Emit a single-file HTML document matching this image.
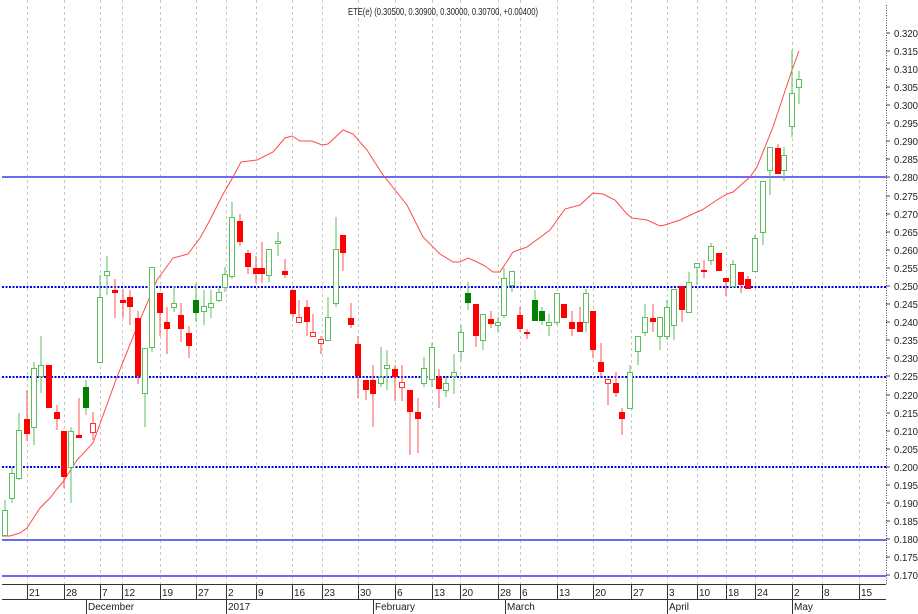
<!DOCTYPE html>
<html><head><meta charset="utf-8"><style>
html,body{margin:0;padding:0;background:#fff;}
svg{display:block;font-family:"Liberation Sans",Arial,sans-serif;}
</style></head><body>
<svg width="918" height="614" viewBox="0 0 918 614" xmlns="http://www.w3.org/2000/svg">
<rect width="918" height="614" fill="#fff"/>
<g stroke="#c8c8c8" stroke-width="1" stroke-dasharray="3,3">
<path d="M27.5 0V584M64.5 0V584M100.5 0V584M122.5 0V584M160.5 0V584M196.5 0V584M226.5 0V584M256.5 0V584M292.5 0V584M322.5 0V584M358.5 0V584M395.5 0V584M432.5 0V584M460.5 0V584M498.5 0V584M520.5 0V584M557.5 0V584M593.5 0V584M631.5 0V584M667.5 0V584M697.5 0V584M726.5 0V584M755.5 0V584M792.5 0V584M822.5 0V584M859.5 0V584"/>
</g>
<g stroke="#6b6bf0" stroke-width="2">
<path d="M2 177H886M2 540H886M2 576H886"/>
</g>
<g stroke="#0000ee" stroke-width="2" stroke-dasharray="2,1.5">
<path d="M2 287H886M2 377H886M2 467H886"/>
</g>
<polyline fill="none" stroke="#ff4a4a" stroke-width="1" points="2,536 10,536 20,533 27,528 40,508 50,498 57,489 63,482 77,460 93,443 117,377 137,327 157,280 173,258 188,254 200,238 210,220 222,196 233,177 241,162 257,160 273,152 285,138 292,136 300,141 312,141 322,145 328,144 343,130 353,134 367,150 383,175 407,205 423,237 440,254 453,262 460,262 468,258 475,261 485,266 493,272 500,272 513,252 527,247 550,230 565,209 580,205 593,193 603,194 615,200 627,214 632,218 647,220 660,226 665,225 680,220 697,212 702,210 717,200 727,194 733,192 750,177 757,167 773,127 792,70 799,51"/>
<g id="c"></g>
<g>
<!-- candles -->
<g stroke-width="1">
<path stroke="#5cbf5c" d="M5 500V535M12 467V503M19 413V480M34 362V445M41 336V393M71 427V503M86 380V415M100 275V362M107 256V295M145 348V427M152 267V352M174 286V312M196 283V322M204 290V325M211 290V318M219 288V302M225 267V292M232 202V279M269 249V282M278 232V256M328 297V340M336 217V307M381 347V387M387 350V390M424 357V387M432 343V387M446 376V397M454 354V394M461 325V361M468 282V310M483 314V350M498 317V332M504 268V318M512 271V292M535 290V321M542 307V325M549 314V336M557 293V325M586 289V332M630 365V408M638 336V365M645 304V336M660 317V350M667 300V340M674 289V340M689 272V312M697 263V285M711 243V265M733 260V286M755 235V271M763 181V245M770 147V195M784 147V181M792 50V137M799 71V104"/>
<path stroke="#ff5050" d="M27 390V441M49 365V408M57 405V430M64 431V488M79 398V438M93 412V440M115 279V318M123 290V318M130 290V325M138 311V384M160 293V336M167 307V354M181 303V342M189 326V358M240 214V246M248 250V274M256 256V283M262 242V283M285 259V278M293 290V318M299 300V322M307 300V336M313 314V336M321 336V354M343 235V271M351 303V328M358 336V398M366 380V400M373 365V427M395 365V401M402 365V401M410 390V455M418 398V453M439 369V408M476 304V347M491 311V328M520 307V332M527 329V339M564 304V318M572 311V336M580 307V332M593 311V358M601 343V376M608 379V405M616 372V397M622 408V435M653 304V332M682 286V322M704 260V278M719 253V271M726 278V296M741 272V293M748 276V289M778 144V174"/>
</g>
<g fill="#fff" stroke="#5cbf5c" stroke-width="1">
<rect x="2.5" y="510.5" width="5" height="25"/><rect x="9.5" y="473.5" width="5" height="25"/><rect x="16.5" y="430.5" width="5" height="48"/><rect x="31.5" y="368.5" width="5" height="59"/><rect x="38.5" y="365.5" width="5" height="11"/><rect x="68.5" y="431.5" width="5" height="36"/><rect x="97.5" y="297.5" width="5" height="65"/><rect x="104.5" y="271.5" width="5" height="4"/><rect x="142.5" y="348.5" width="5" height="45"/><rect x="149.5" y="267.5" width="5" height="80"/><rect x="171.5" y="303.5" width="5" height="4"/><rect x="201.5" y="306.5" width="5" height="5"/><rect x="208.5" y="303.5" width="5" height="4"/><rect x="216.5" y="292.5" width="5" height="8"/><rect x="222.5" y="274.5" width="5" height="13"/><rect x="229.5" y="217.5" width="5" height="59"/><rect x="266.5" y="249.5" width="5" height="26"/><rect x="275.5" y="241.5" width="5" height="2"/><rect x="325.5" y="317.5" width="5" height="23"/><rect x="333.5" y="249.5" width="5" height="54"/><rect x="378.5" y="377.5" width="5" height="6"/><rect x="384.5" y="365.5" width="5" height="3"/><rect x="421.5" y="368.5" width="5" height="15"/><rect x="429.5" y="347.5" width="5" height="32"/><rect x="443.5" y="383.5" width="5" height="7"/><rect x="451.5" y="372.5" width="5" height="4"/><rect x="458.5" y="332.5" width="5" height="19"/><rect x="480.5" y="314.5" width="5" height="26"/><rect x="495.5" y="322.5" width="5" height="3"/><rect x="501.5" y="278.5" width="5" height="37"/><rect x="509.5" y="271.5" width="5" height="14"/><rect x="546.5" y="322.5" width="5" height="3"/><rect x="554.5" y="293.5" width="5" height="29"/><rect x="583.5" y="293.5" width="5" height="29"/><rect x="627.5" y="372.5" width="5" height="36"/><rect x="635.5" y="336.5" width="5" height="15"/><rect x="642.5" y="317.5" width="5" height="15"/><rect x="657.5" y="317.5" width="5" height="19"/><rect x="664.5" y="307.5" width="5" height="29"/><rect x="671.5" y="289.5" width="5" height="36"/><rect x="686.5" y="282.5" width="5" height="30"/><rect x="694.5" y="263.5" width="5" height="4"/><rect x="708.5" y="246.5" width="5" height="14"/><rect x="730.5" y="264.5" width="5" height="22"/><rect x="752.5" y="238.5" width="5" height="33"/><rect x="760.5" y="181.5" width="5" height="51"/><rect x="767.5" y="147.5" width="5" height="23"/><rect x="781.5" y="155.5" width="5" height="15"/><rect x="789.5" y="93.5" width="5" height="33"/><rect x="796.5" y="79.5" width="5" height="8"/>
</g>
<g fill="#008000">
<rect x="83" y="387" width="6" height="21"/><rect x="193" y="300" width="6" height="13"/><rect x="465" y="293" width="6" height="10"/><rect x="532" y="300" width="6" height="21"/><rect x="539" y="311" width="6" height="10"/>
</g>
<g fill="#fff" stroke="#ff3030" stroke-width="1">
<rect x="90.5" y="423.5" width="5" height="9"/><rect x="296.5" y="317.5" width="5" height="5"/><rect x="310.5" y="332.5" width="5" height="4"/><rect x="318.5" y="339.5" width="5" height="4"/><rect x="399.5" y="382.5" width="5" height="5"/><rect x="605.5" y="379.5" width="5" height="4"/>
</g>
<g fill="#ff0000">
<rect x="24" y="419" width="6" height="15"/><rect x="46" y="365" width="6" height="43"/><rect x="54" y="412" width="6" height="7"/><rect x="61" y="431" width="6" height="46"/><rect x="76" y="435" width="6" height="3"/><rect x="112" y="290" width="6" height="3"/><rect x="120" y="300" width="6" height="3"/><rect x="127" y="297" width="6" height="10"/><rect x="135" y="318" width="6" height="58"/><rect x="157" y="293" width="6" height="20"/><rect x="164" y="322" width="6" height="7"/><rect x="178" y="315" width="6" height="14"/><rect x="186" y="333" width="6" height="13"/><rect x="237" y="221" width="6" height="21"/><rect x="245" y="253" width="6" height="14"/><rect x="253" y="268" width="6" height="6"/><rect x="259" y="268" width="6" height="6"/><rect x="282" y="271" width="6" height="4"/><rect x="290" y="290" width="6" height="24"/><rect x="304" y="307" width="6" height="15"/><rect x="340" y="235" width="6" height="18"/><rect x="348" y="318" width="6" height="7"/><rect x="355" y="344" width="6" height="32"/><rect x="363" y="380" width="6" height="10"/><rect x="370" y="380" width="6" height="14"/><rect x="392" y="369" width="6" height="8"/><rect x="407" y="390" width="6" height="22"/><rect x="415" y="412" width="6" height="7"/><rect x="436" y="377" width="6" height="12"/><rect x="473" y="304" width="6" height="32"/><rect x="488" y="319" width="6" height="5"/><rect x="517" y="315" width="6" height="14"/><rect x="524" y="332" width="6" height="2"/><rect x="561" y="304" width="6" height="14"/><rect x="569" y="322" width="6" height="7"/><rect x="577" y="322" width="6" height="10"/><rect x="590" y="311" width="6" height="39"/><rect x="598" y="362" width="6" height="10"/><rect x="613" y="383" width="6" height="10"/><rect x="619" y="412" width="6" height="7"/><rect x="650" y="318" width="6" height="4"/><rect x="679" y="286" width="6" height="24"/><rect x="701" y="270" width="6" height="2"/><rect x="716" y="253" width="6" height="18"/><rect x="723" y="278" width="6" height="4"/><rect x="738" y="272" width="6" height="13"/><rect x="745" y="279" width="6" height="10"/><rect x="775" y="148" width="6" height="26"/>
</g>
</g>
<text x="348" y="15" font-size="10.5" fill="#222" textLength="190" lengthAdjust="spacingAndGlyphs">ETE(e) (0.30500, 0.30900, 0.30000, 0.30700, +0.00400)</text>
<line x1="886.5" y1="5" x2="886.5" y2="584" stroke="#444" stroke-dasharray="1,1.5"/>
<g stroke="#444"><path d="M886 33H890M886 51H890M886 69H890M886 87H890M886 105H890M886 123H890M886 141H890M886 159H890M886 177H890M886 196H890M886 214H890M886 232H890M886 250H890M886 268H890M886 286H890M886 304H890M886 322H890M886 340H890M886 358H890M886 376H890M886 395H890M886 413H890M886 431H890M886 449H890M886 467H890M886 485H890M886 503H890M886 521H890M886 539H890M886 557H890M886 575H890"/></g>
<g font-size="10" fill="#222" textLength="26">
<text x="894" y="37" textLength="24" lengthAdjust="spacingAndGlyphs">0.320</text><text x="894" y="55" textLength="24" lengthAdjust="spacingAndGlyphs">0.315</text><text x="894" y="73" textLength="24" lengthAdjust="spacingAndGlyphs">0.310</text><text x="894" y="91" textLength="24" lengthAdjust="spacingAndGlyphs">0.305</text><text x="894" y="109" textLength="24" lengthAdjust="spacingAndGlyphs">0.300</text><text x="894" y="127" textLength="24" lengthAdjust="spacingAndGlyphs">0.295</text><text x="894" y="145" textLength="24" lengthAdjust="spacingAndGlyphs">0.290</text><text x="894" y="163" textLength="24" lengthAdjust="spacingAndGlyphs">0.285</text><text x="894" y="181" textLength="24" lengthAdjust="spacingAndGlyphs">0.280</text><text x="894" y="200" textLength="24" lengthAdjust="spacingAndGlyphs">0.275</text><text x="894" y="218" textLength="24" lengthAdjust="spacingAndGlyphs">0.270</text><text x="894" y="236" textLength="24" lengthAdjust="spacingAndGlyphs">0.265</text><text x="894" y="254" textLength="24" lengthAdjust="spacingAndGlyphs">0.260</text><text x="894" y="272" textLength="24" lengthAdjust="spacingAndGlyphs">0.255</text><text x="894" y="290" textLength="24" lengthAdjust="spacingAndGlyphs">0.250</text><text x="894" y="308" textLength="24" lengthAdjust="spacingAndGlyphs">0.245</text><text x="894" y="326" textLength="24" lengthAdjust="spacingAndGlyphs">0.240</text><text x="894" y="344" textLength="24" lengthAdjust="spacingAndGlyphs">0.235</text><text x="894" y="362" textLength="24" lengthAdjust="spacingAndGlyphs">0.230</text><text x="894" y="380" textLength="24" lengthAdjust="spacingAndGlyphs">0.225</text><text x="894" y="399" textLength="24" lengthAdjust="spacingAndGlyphs">0.220</text><text x="894" y="417" textLength="24" lengthAdjust="spacingAndGlyphs">0.215</text><text x="894" y="435" textLength="24" lengthAdjust="spacingAndGlyphs">0.210</text><text x="894" y="453" textLength="24" lengthAdjust="spacingAndGlyphs">0.205</text><text x="894" y="471" textLength="24" lengthAdjust="spacingAndGlyphs">0.200</text><text x="894" y="489" textLength="24" lengthAdjust="spacingAndGlyphs">0.195</text><text x="894" y="507" textLength="24" lengthAdjust="spacingAndGlyphs">0.190</text><text x="894" y="525" textLength="24" lengthAdjust="spacingAndGlyphs">0.185</text><text x="894" y="543" textLength="24" lengthAdjust="spacingAndGlyphs">0.180</text><text x="894" y="561" textLength="24" lengthAdjust="spacingAndGlyphs">0.175</text><text x="894" y="579" textLength="24" lengthAdjust="spacingAndGlyphs">0.170</text>
</g>
<g stroke="#333" stroke-width="1">
<path d="M2 584.5H886M2 599.5H886"/>
<path d="M27.5 584V599M64.5 584V599M100.5 584V599M122.5 584V599M160.5 584V599M196.5 584V599M226.5 584V599M256.5 584V599M292.5 584V599M322.5 584V599M358.5 584V599M395.5 584V599M432.5 584V599M460.5 584V599M498.5 584V599M520.5 584V599M557.5 584V599M593.5 584V599M631.5 584V599M667.5 584V599M697.5 584V599M726.5 584V599M755.5 584V599M792.5 584V599M822.5 584V599M859.5 584V599"/>
<path d="M86.5 599V614M226.5 599V614M373.5 599V614M505.5 599V614M667.5 599V614M792.5 599V614"/>
</g>
<g font-size="10" fill="#222">
<text x="29" y="596">21</text><text x="66" y="596">28</text><text x="102" y="596">7</text><text x="124" y="596">12</text><text x="162" y="596">19</text><text x="198" y="596">27</text><text x="228" y="596">2</text><text x="258" y="596">9</text><text x="294" y="596">16</text><text x="324" y="596">23</text><text x="360" y="596">30</text><text x="397" y="596">6</text><text x="434" y="596">13</text><text x="462" y="596">20</text><text x="500" y="596">28</text><text x="522" y="596">6</text><text x="559" y="596">13</text><text x="595" y="596">20</text><text x="633" y="596">27</text><text x="669" y="596">3</text><text x="699" y="596">10</text><text x="728" y="596">18</text><text x="757" y="596">24</text><text x="794" y="596">2</text><text x="824" y="596">8</text><text x="861" y="596">15</text>
<text x="88" y="610">December</text><text x="228" y="610">2017</text><text x="375" y="610">February</text><text x="507" y="610">March</text><text x="669" y="610">April</text><text x="794" y="610">May</text>
</g>
</svg>
</body></html>
